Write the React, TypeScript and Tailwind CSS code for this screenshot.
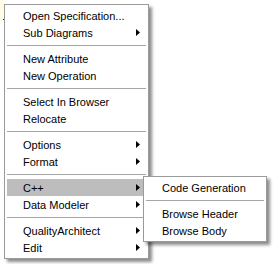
import React from "react";

type Entry = { label: string; sub?: boolean; active?: boolean } | "sep";

const mainItems: Entry[] = [
  { label: "Open Specification..." },
  { label: "Sub Diagrams", sub: true },
  "sep",
  { label: "New Attribute" },
  { label: "New Operation" },
  "sep",
  { label: "Select In Browser" },
  { label: "Relocate" },
  "sep",
  { label: "Options", sub: true },
  { label: "Format", sub: true },
  "sep",
  { label: "C++", sub: true, active: true },
  { label: "Data Modeler", sub: true },
  "sep",
  { label: "QualityArchitect", sub: true },
  { label: "Edit", sub: true },
];

const cppItems: Entry[] = [
  { label: "Code Generation" },
  "sep",
  { label: "Browse Header" },
  { label: "Browse Body" },
];

function Arrow() {
  return (
    <svg width="4" height="7" viewBox="0 0 4 7" className="block">
      <path d="M0 0 L4 3.5 L0 7 Z" fill="#000" />
    </svg>
  );
}

function MenuList({ items }: { items: Entry[] }) {
  return (
    <div className="flex flex-col p-[2px]">
      {items.map((item, i) =>
        item === "sep" ? (
          <div key={i} className="h-[9px] pt-[4px]">
            <div className="h-px bg-[#a6a6a6]" />
          </div>
        ) : (
          <div
            key={i}
            className={`flex h-[17px] items-center justify-between pl-[16px] pr-[6px] leading-[17px] ${
              item.active ? "bg-[#bdbdbd]" : ""
            }`}
          >
            <span className="whitespace-nowrap pt-px">{item.label}</span>
            {item.sub && <Arrow />}
          </div>
        )
      )}
    </div>
  );
}

export default function App() {
  return (
    <div
      className="relative h-[264px] w-[280px] overflow-hidden bg-white text-[11px] text-black"
      style={{ fontFamily: '"Liberation Sans", Arial, sans-serif' }}
    >
      {/* bit of the diagram showing behind the menu */}
      <div className="absolute left-0 top-0 h-[22px] w-[4px] bg-[#fffde8]" />
      <div className="absolute left-[3px] top-[19px] h-px w-px bg-[#800000]" />

      <div className="ml-[4px] mt-[4px] w-[145px] border border-[#9a9a9a] bg-white shadow-[3px_3px_3px_rgba(0,0,0,0.45)]">
        <MenuList items={mainItems} />
      </div>

      <div className="absolute left-[143px] top-[176px] w-[124px] border border-[#9a9a9a] bg-white shadow-[3px_3px_3px_rgba(0,0,0,0.45)]">
        <MenuList items={cppItems} />
      </div>
    </div>
  );
}
